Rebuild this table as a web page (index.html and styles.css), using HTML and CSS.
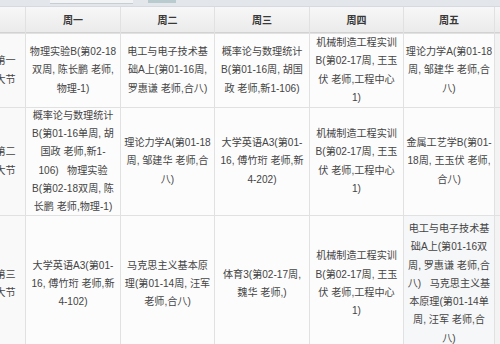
FILE: index.html
```html
<!DOCTYPE html>
<html lang="zh">
<head>
<meta charset="utf-8">
<link rel="stylesheet" href="styles.css">
</head>
<body>
<div class="topbar">
  <div class="field"></div>
  <div class="btn"></div>
</div>
<div class="grid">
  <div class="hd"></div>
  <div class="hd">周一</div>
  <div class="hd">周二</div>
  <div class="hd">周三</div>
  <div class="hd">周四</div>
  <div class="hd">周五</div>
  <div class="hd"></div>

  <div class="c side">第一<br>大节</div>
  <div class="c">物理实验B(第02-18<br>双周, 陈长鹏 老师,<br>物理-1)</div>
  <div class="c">电工与电子技术基<br>础A上(第01-16周,<br>罗惠谦 老师,合八)</div>
  <div class="c">概率论与数理统计<br>B(第01-16周, 胡国<br>政 老师,新1-106)</div>
  <div class="c">机械制造工程实训<br>B(第02-17周, 王玉<br>伏 老师,工程中心<br>1)</div>
  <div class="c">理论力学A(第01-18<br>周, 邹建华 老师,合<br>八)</div>
  <div class="c edge"></div>

  <div class="c side">第二<br>大节</div>
  <div class="c">概率论与数理统计<br>B(第01-16单周, 胡<br>国政 老师,新1-<br>106)&nbsp;&nbsp; 物理实验<br>B(第02-18双周, 陈<br>长鹏 老师,物理-1)</div>
  <div class="c">理论力学A(第01-18<br>周, 邹建华 老师,合<br>八)</div>
  <div class="c">大学英语A3(第01-<br>16, 傅竹珩 老师,新<br>4-202)</div>
  <div class="c">机械制造工程实训<br>B(第02-17周, 王玉<br>伏 老师,工程中心<br>1)</div>
  <div class="c">金属工艺学B(第01-<br>18周, 王玉伏 老师,<br>合八)</div>
  <div class="c edge"></div>

  <div class="c side">第三<br>大节</div>
  <div class="c">大学英语A3(第01-<br>16, 傅竹珩 老师,新<br>4-102)</div>
  <div class="c">马克思主义基本原<br>理(第01-14周, 汪军<br>老师,合八)</div>
  <div class="c">体育3(第02-17周,<br>魏华 老师,)</div>
  <div class="c">机械制造工程实训<br>B(第02-17周, 王玉<br>伏 老师,工程中心<br>1)</div>
  <div class="c shade">电工与电子技术基<br>础A上(第01-16双<br>周, 罗惠谦 老师,合<br>八)&nbsp;&nbsp; 马克思主义基<br>本原理(第01-14单<br>周, 汪军 老师,合<br>八)</div>
  <div class="c edge"></div>
</div>
</body>
</html>
```

FILE: styles.css
```css
html, body {
  margin: 0;
  padding: 0;
  width: 500px;
  height: 344px;
  overflow: hidden;
  background: #fbfbfb;
  font-family: "Liberation Sans", "Noto Sans CJK SC", sans-serif;
}

.topbar {
  height: 6px;
  background: #e3e6eb;
  border-bottom: 1px solid #d6dae0;
  display: flex;
  align-items: flex-start;
}

.field {
  margin-left: 50px;
  width: 83px;
  height: 3px;
  background: #f2f3f5;
  border-bottom: 1px solid #c9cdd3;
}

.btn {
  margin-left: 15px;
  width: 28px;
  height: 3px;
  background: #b9cbcf;
}

.grid {
  display: grid;
  grid-template-columns: 39px 94px 93px 94px 93px 90px 20px;
  grid-template-rows: 26px 73px 107px 136px;
  gap: 1px;
  margin-left: -14px;
  background: #e1e1e1;
}

.hd {
  background: linear-gradient(#f7f7f7, #ebebeb);
  border-bottom: 1px solid #d2d2d2;
  font-weight: bold;
  font-size: 10px;
  color: #383838;
  display: flex;
  align-items: center;
  justify-content: center;
}

.c {
  background: #fcfcfc;
  font-size: 10.1px;
  line-height: 18.3px;
  color: #444;
  text-align: center;
  display: flex;
  align-items: center;
  justify-content: center;
  padding: 0 1px;
  white-space: nowrap;
  overflow: hidden;
}

.side {
  background: #f9f9f9;
}

.shade {
  background: #f6f7f8;
}

.edge {
  background: #f3f3f3;
}
```
